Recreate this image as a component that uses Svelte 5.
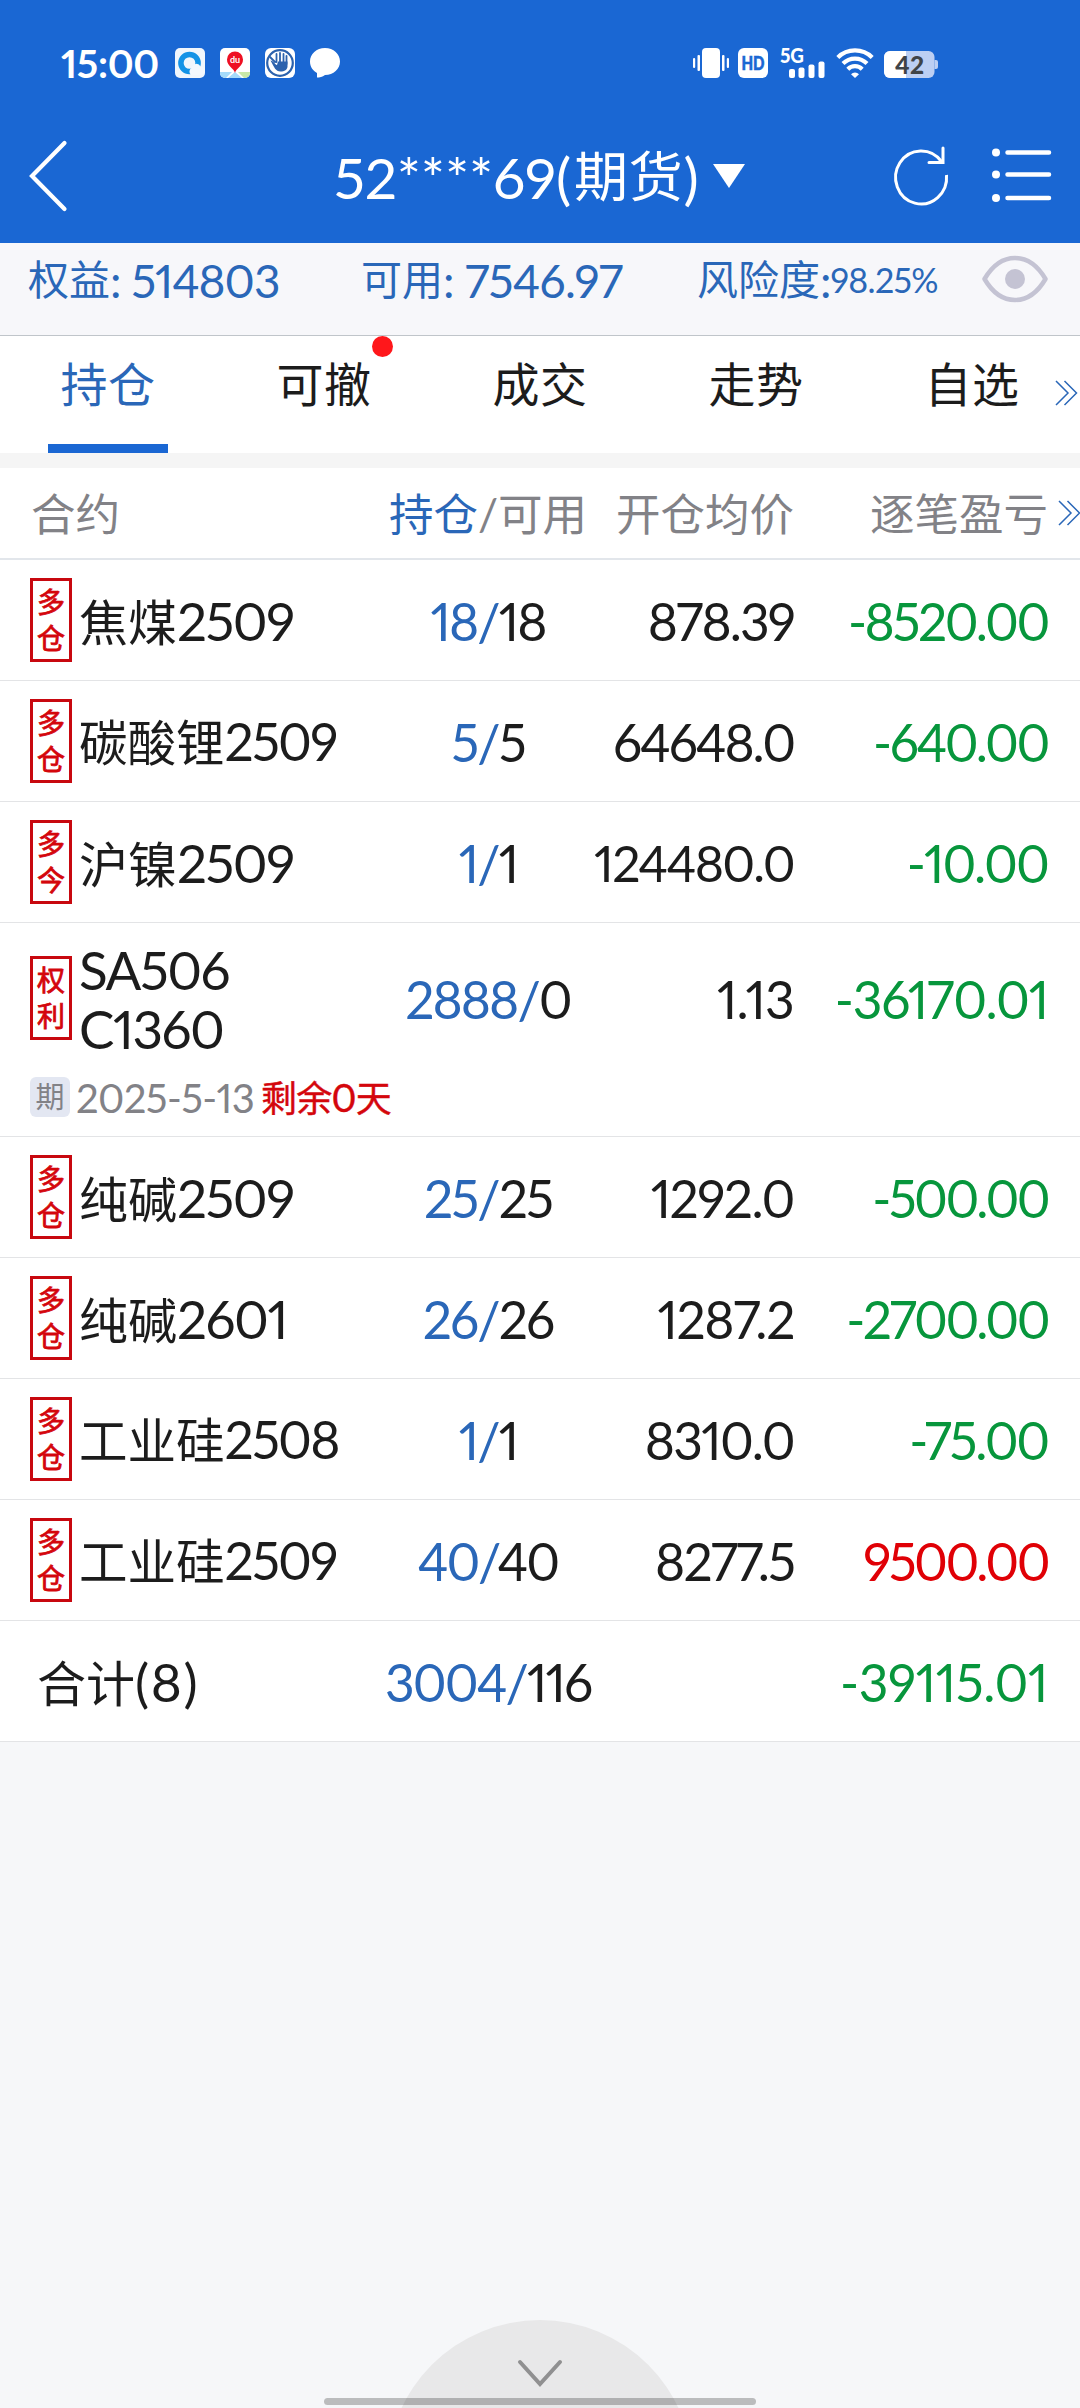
<script lang="ts">
  interface Position {
    tag: string
    name: string
    code: string
    code2?: string
    held: string
    usable: string
    price: string
    profit: string
    expiry?: string
    remain?: number
  }

  let activeTab = $state('持仓')

  const tabs = [
    { label: '持仓', dot: false },
    { label: '可撤', dot: true },
    { label: '成交', dot: false },
    { label: '走势', dot: false },
    { label: '自选', dot: false },
  ]

  const positions: Position[] = [
    { tag: '多仓', name: '焦煤', code: '2509', held: '18', usable: '18', price: '878.39', profit: '-8520.00' },
    { tag: '多仓', name: '碳酸锂', code: '2509', held: '5', usable: '5', price: '64648.0', profit: '-640.00' },
    { tag: '多今', name: '沪镍', code: '2509', held: '1', usable: '1', price: '124480.0', profit: '-10.00' },
    {
      tag: '权利',
      name: '',
      code: 'SA506',
      code2: 'C1360',
      held: '2888',
      usable: '0',
      price: '1.13',
      profit: '-36170.01',
      expiry: '2025-5-13',
      remain: 0,
    },
    { tag: '多仓', name: '纯碱', code: '2509', held: '25', usable: '25', price: '1292.0', profit: '-500.00' },
    { tag: '多仓', name: '纯碱', code: '2601', held: '26', usable: '26', price: '1287.2', profit: '-2700.00' },
    { tag: '多仓', name: '工业硅', code: '2508', held: '1', usable: '1', price: '8310.0', profit: '-75.00' },
    { tag: '多仓', name: '工业硅', code: '2509', held: '40', usable: '40', price: '8277.5', profit: '9500.00' },
  ]

  // proportional figures: the 1 sets tight and the 0 wide, so even the amounts out
  function tracking(value: string) {
    const ones = value.split('1').length - 1
    const zeros = value.split('0').length - 1
    return `${(-1.9 + ones * 0.55 - zeros * 0.17).toFixed(2)}px`
  }
</script>

{#snippet more()}
  <svg class="more" width="22" height="26" viewBox="0 0 22 26">
    <path d="M1 1l12 12L1 25M9.500 1l12 12-12 12" fill="none" stroke="currentColor" stroke-width="1.500" />
  </svg>
{/snippet}

<div class="screen">
  <header>
    <div class="status">
      <span class="clock">15:00</span>
      <div class="apps">
        <svg width="30" height="30" viewBox="0 0 30 30">
          <rect width="30" height="30" rx="5" fill="#f1f6fc" />
          <circle cx="14.500" cy="15" r="8.600" fill="none" stroke="#1593e6" stroke-width="5.500" />
          <path d="M16 27a4.500 4.500 0 0 1 1-7.500 4.500 4.500 0 0 1 8.500-1 4.300 4.300 0 0 1 1 8.500z" fill="#f4f8fd" />
        </svg>
        <svg width="30" height="30" viewBox="0 0 30 30">
          <rect width="30" height="30" rx="5" fill="#fff" />
          <path d="M0 24h12l-6 6H5a5 5 0 0 1-5-5z" fill="#a5dbfa" />
          <path d="M18 24h12v1a5 5 0 0 1-5 5h-1z" fill="#c8e8a8" />
          <path d="M8 30l7-6 7 6z" fill="#a5dbfa" />
          <path d="M15 25c-1-5-8-6.500-8-13.500a8 8 0 0 1 16 0C23 18.500 16 20 15 25z" fill="#ee1023" />
          <text x="15" y="15" text-anchor="middle" font-size="9" font-weight="700" fill="#fff">du</text>
        </svg>
        <svg width="30" height="30" viewBox="0 0 30 30">
          <rect width="30" height="30" rx="6" fill="#fff" />
          <g fill="none" stroke="#2c62ad" stroke-linecap="round">
            <circle cx="15" cy="15" r="12.800" stroke-width="2.200" />
            <path d="M5 9l5 5M11.500 6v8M15 5v9M18.500 6v8M21.500 8v8" stroke-width="1.800" />
          </g>
          <path d="M5.500 12.500c3 0 4 4 6.500 4.500l1-3.500h9.500v5c0 3-3 5-7 5-5 0-6-4-10-11z" fill="#2c62ad" />
        </svg>
        <svg width="30" height="30" viewBox="0 0 30 30">
          <path d="M15 0c8.500 0 15 6 15 13.500S23.500 27 15 27c-2.500 2.200-5.500 2.500-8 2.500V25C3 22.500 0 19 0 13.500 0 6 6.500 0 15 0z" fill="#fff" />
        </svg>
      </div>
      <div class="signals">
        <svg width="36" height="30" viewBox="0 0 36 30" fill="#fff">
          <rect x="9" width="18" height="30" rx="4" />
          <rect x="4.500" y="7" width="2.500" height="16" rx="1" />
          <rect x="0" y="10" width="2.200" height="10" rx="1" />
          <rect x="29" y="7" width="2.500" height="16" rx="1" />
          <rect x="33.800" y="10" width="2.200" height="10" rx="1" />
        </svg>
        <svg class="hd" width="30" height="30" viewBox="0 0 30 30">
          <rect width="30" height="30" rx="6" fill="#fff" />
          <text x="3.500" y="22" textLength="23" lengthAdjust="spacingAndGlyphs" font-size="19" font-weight="900" fill="#1a67d3" stroke="#1a67d3" stroke-width="0.600">HD</text>
        </svg>
        <svg class="cell" width="45" height="30" viewBox="0 0 45 30" fill="#fff">
          <text x="0" y="14.500" textLength="24" lengthAdjust="spacingAndGlyphs" font-size="20" font-weight="900">5G</text>
          <rect x="9" y="21" width="6" height="9" rx="2" />
          <rect x="18.500" y="19.500" width="6" height="10.500" rx="2" />
          <rect x="28.500" y="16.500" width="6" height="13.500" rx="2" />
          <rect x="38.500" y="13.500" width="6" height="16.500" rx="2" />
        </svg>
        <svg class="wifi" width="38" height="30" viewBox="0 0 38 30">
          <g fill="none" stroke="#fff" stroke-width="4.200">
            <path d="M1.800 9.500a24.500 24.500 0 0 1 34.400 0" />
            <path d="M7 15.600a17 17 0 0 1 24 0" />
            <path d="M11.800 21.200a10.200 10.200 0 0 1 14.400 0" />
          </g>
          <path d="M15 26.300a5.600 5.600 0 0 1 8 0l-4 3.700z" fill="#fff" />
        </svg>
        <svg class="battery" width="54" height="27" viewBox="0 0 54 27">
          <rect width="50.500" height="27" rx="6" fill="#bccff3" />
          <path d="M50.500 9h1.500a2 2 0 0 1 2 2v5a2 2 0 0 1-2 2h-1.500z" fill="#bccff3" />
          <path d="M6 0h16v27H6a6 6 0 0 1-6-6V6a6 6 0 0 1 6-6z" fill="#fff" />
          <text x="11" y="22.800" textLength="29" font-size="24.500" font-weight="900" fill="#3f4448">42</text>
        </svg>
      </div>
    </div>

    <div class="titlebar">
      <button class="back" type="button" aria-label="返回">
        <svg width="38" height="72" viewBox="0 0 38 72">
          <path d="M35.500 3L3 36l32.500 33" fill="none" stroke="#fff" stroke-width="4.200" stroke-linecap="round" />
        </svg>
      </button>
      <div class="account">
        <span>52****69(</span><span class="zh">期货</span><span>)</span>
        <svg width="32" height="24" viewBox="0 0 32 24"><path d="M0 0h32L16 24z" fill="#fff" /></svg>
      </div>
      <div class="actions">
        <svg width="54" height="58" viewBox="0 0 54 58" fill="none" stroke="#fff" stroke-width="3">
          <path d="M52.500 28a25.500 26.500 0 1 1-5-13.500" />
          <path d="M49 1v14.500H35" stroke-linecap="round" />
        </svg>
        <svg width="58" height="56" viewBox="0 0 58 56">
          <g fill="#fff">
            <circle cx="4" cy="4.500" r="4" />
            <circle cx="4" cy="26.500" r="4" />
            <circle cx="4" cy="50" r="4" />
          </g>
          <path d="M15.500 4.500H57M15.500 26.500H57M15.500 50H57" stroke="#fff" stroke-width="4.500" stroke-linecap="round" />
        </svg>
      </div>
    </div>
  </header>

  <section class="funds">
    <div class="fund equity"><span class="zh">权益</span>: 514803</div>
    <div class="fund usable"><span class="zh">可用</span>: 7546.97</div>
    <div class="fund risk"><span class="zh">风险度</span>:<small>98.25%</small></div>
    <svg width="66" height="48" viewBox="0 0 66 48">
      <path d="M2.500 24C19-4 47-4 63.500 24 47 52 19 52 2.500 24z" fill="none" stroke="#c4c3d3" stroke-width="4.500" stroke-linejoin="round" />
      <circle cx="33" cy="24" r="10" fill="#c4c3d3" />
    </svg>
  </section>

  <nav class="tabs">
    {#each tabs as tab}
      <button type="button" class="tab" class:active={activeTab === tab.label} onclick={() => (activeTab = tab.label)}>
        {tab.label}
        {#if tab.dot}<i class="dot"></i>{/if}
      </button>
    {/each}
    <span class="tabs-more">{@render more()}</span>
  </nav>

  <main>
    <div class="row thead">
      <span class="contract">合约</span>
      <span class="qty"><b>持仓</b>/可用</span>
      <span class="price">开仓均价</span>
      <span class="profit">逐笔盈亏</span>
      <span class="head-more">{@render more()}</span>
    </div>

    {#each positions as p}
      <div class="item">
        <div class="row" class:tall={p.code2}>
          <div class="contract">
            <span class="tag">{p.tag}</span>
            <span class="name" class:long={p.name.length > 2}>
              {#if p.name}<span class="zh">{p.name}</span>{/if}{p.code}{#if p.code2}<br />{p.code2}{/if}
            </span>
          </div>
          <span class="qty"><b>{p.held}/</b>{p.usable}</span>
          <span class="price" class:long={p.price.length > 7} style:letter-spacing={tracking(p.price)}>{p.price}</span>
          <span class="profit" class:up={!p.profit.startsWith('-')} style:letter-spacing={tracking(p.profit)}>{p.profit}</span>
        </div>
        {#if p.expiry}
          <div class="expiry">
            <span class="mark">期</span>
            <span class="date">{p.expiry}</span>
            <span class="remain"><span class="zh">剩余</span>{p.remain}<span class="zh">天</span></span>
          </div>
        {/if}
      </div>
    {/each}

    <div class="item">
      <div class="row total">
        <div class="contract"><span class="name"><span class="zh">合计</span>(8)</span></div>
        <span class="qty"><b>3004/</b>116</span>
        <span class="price"></span>
        <span class="profit" style:letter-spacing={tracking('-39115.01')}>-39115.01</span>
      </div>
    </div>
  </main>

  <footer>
    <div class="drawer">
      <svg width="46" height="30" viewBox="0 0 46 30">
        <path d="M3 3l20 22L43 3" fill="none" stroke="#909091" stroke-width="4" stroke-linecap="round" />
      </svg>
    </div>
    <div class="home-bar"></div>
  </footer>
</div>

<style>
  :global(body) {
    background: #f6f7f9;
  }

  .screen {
    position: relative;
    width: 1080px;
    height: 2408px;
    overflow: hidden;
    display: flex;
    flex-direction: column;
    background: #f6f7f9;
    color: #1c1c1c;
    font-family: Lato, 'Noto Sans CJK SC', sans-serif;
    font-variant-numeric: proportional-nums lining-nums;
    white-space: nowrap;
  }

  svg {
    display: block;
    flex-shrink: 0;
    overflow: visible;
  }

  button {
    padding: 0;
    border: 0;
    background: none;
    color: inherit;
    font: inherit;
  }

  b {
    font-weight: inherit;
    color: #2a67b8;
  }

  header {
    height: 243px;
    flex-shrink: 0;
    background: #1a67d3;
    color: #fff;
  }

  .status {
    display: flex;
    align-items: center;
    height: 126px;
    padding: 0 142px 0 61px;
  }

  .clock {
    width: 114px;
    font-size: 39px;
    font-weight: 700;
    line-height: 40px;
    letter-spacing: -0.3px;
  }

  .apps {
    display: flex;
    gap: 15px;
  }

  .signals {
    display: flex;
    align-items: center;
    margin-left: auto;
  }

  .hd {
    margin-left: 9px;
  }

  .cell {
    margin-left: 12px;
  }

  .wifi {
    margin-left: 11px;
  }

  .battery {
    margin: 3px 0 0 10px;
  }

  .titlebar {
    display: grid;
    grid-template-columns: 300px 1fr 300px;
    align-items: center;
    height: 99px;
  }

  .back {
    padding-left: 29px;
    justify-self: start;
  }

  .account {
    display: flex;
    align-items: center;
    padding: 2px 0 0 34px;
    font-size: 57px;
    line-height: 90px;
    letter-spacing: -0.2px;
  }

  .account .zh {
    font-size: 54px;
    letter-spacing: 0.8px;
    margin-left: 3px;
  }

  .account svg {
    margin: -2px 0 0 14px;
  }

  .actions {
    display: flex;
    align-items: center;
    justify-content: flex-end;
    gap: 44px;
    padding-right: 30px;
  }

  .funds {
    display: flex;
    align-items: flex-start;
    flex-shrink: 0;
    height: 92px;
    border-bottom: 1px solid #c0c5ca;
    background: #f7f7fa;
    color: #2a67b8;
    font-size: 46px;
    line-height: 76px;
  }

  .fund {
    height: 76px;
    letter-spacing: -1px;
  }

  .fund .zh {
    position: relative;
    top: -3px;
    font-size: 41px;
    letter-spacing: 0;
  }

  .equity {
    width: 333px;
    padding-left: 28px;
  }

  .usable {
    width: 336px;
    letter-spacing: -0.7px;
  }

  .risk {
    width: 285px;
  }

  .risk small {
    position: relative;
    top: -5px;
    font-size: 34px;
    letter-spacing: -0.7px;
  }

  .funds svg {
    margin-top: 12px;
  }

  .tabs {
    position: relative;
    display: grid;
    grid-template-columns: repeat(5, 1fr);
    flex-shrink: 0;
    height: 117px;
    background: #fff;
  }

  .tab {
    position: relative;
    height: 117px;
    padding-bottom: 21px;
    font-size: 47px;
    line-height: 96px;
    letter-spacing: 0.5px;
  }

  .tab.active {
    color: #2a67b8;
  }

  .tab.active::after {
    content: '';
    position: absolute;
    left: 48px;
    bottom: 0;
    width: 120px;
    height: 9px;
    background: #1a67d3;
  }

  .dot {
    position: absolute;
    top: 0;
    right: 39px;
    width: 21px;
    height: 21px;
    border-radius: 50%;
    background: #ff171b;
  }

  .tabs-more,
  .head-more {
    position: absolute;
    color: #2a67b8;
  }

  .tabs-more {
    top: 44px;
    right: 3px;
  }

  .head-more {
    top: 32px;
    right: 0;
  }

  main {
    border-top: 15px solid #f5f5f5;
  }

  .row {
    display: grid;
    grid-template-columns: 370px 236px 188px 254px;
    align-items: center;
    height: 120px;
    font-size: 51.500px;
    line-height: 59px;
    letter-spacing: -1.900px;
  }

  .row.tall {
    height: 150px;
  }

  .thead {
    position: relative;
    height: 90px;
    border-bottom: 2px solid #e2e6eb;
    background: #fff;
    color: #828287;
    font-size: 44.500px;
    letter-spacing: 0;
  }

  .thead .contract {
    padding-left: 31px;
  }

  .item {
    border-bottom: 1px solid #e3e4e6;
    background: #fff;
  }

  .item .qty,
  .item .price,
  .item .profit,
  .item .name {
    padding-top: 2px;
  }

  .contract {
    display: flex;
    align-items: center;
    padding-left: 30px;
  }

  .tag {
    width: 42px;
    height: 84px;
    box-sizing: border-box;
    margin-right: 7px;
    padding: 3px 4px 0;
    border: 3px solid #c8080f;
    color: #d4060c;
    font-size: 28px;
    line-height: 36px;
    letter-spacing: 0;
    text-align: center;
    white-space: normal;
    word-break: break-all;
    -webkit-text-stroke: 0.8px #d4060c;
  }

  .name {
    font-size: 53px;
    letter-spacing: -1.500px;
  }

  .name.long {
    font-size: 51.500px;
    letter-spacing: -1.800px;
  }

  .name .zh {
    font-size: 49px;
    letter-spacing: 0;
  }

  .name.long .zh {
    font-size: 48.500px;
  }

  .total .contract {
    padding-left: 37px;
  }

  .total .name {
    letter-spacing: 1.600px;
  }

  .qty {
    text-align: center;
  }

  .price,
  .profit {
    justify-self: end;
    text-align: right;
  }

  .price.long {
    font-size: 50px;
  }

  .item .profit {
    color: #07963c;
  }

  .item .profit.up {
    color: #e00006;
  }

  .expiry {
    display: flex;
    align-items: center;
    height: 48px;
    padding: 0 0 15px 30px;
    font-size: 40px;
    line-height: 48px;
  }

  .mark {
    width: 40px;
    height: 40px;
    border-radius: 6px;
    background: #e3e7f2;
    color: #828287;
    font-size: 29px;
    line-height: 40px;
    text-align: center;
  }

  .date {
    width: 185px;
    padding: 2px 0 0 6px;
    color: #828287;
    letter-spacing: -0.6px;
  }

  .remain {
    color: #d4060c;
    font-size: 38px;
    letter-spacing: -0.8px;
    -webkit-text-stroke: 0.4px #d4060c;
  }

  .remain .zh {
    font-size: 36px;
  }

  footer {
    position: absolute;
    left: 0;
    right: 0;
    bottom: 0;
    height: 88px;
    overflow: hidden;
  }

  .drawer {
    display: flex;
    justify-content: center;
    width: 306px;
    height: 306px;
    box-sizing: border-box;
    margin: 0 auto;
    padding-top: 39px;
    border-radius: 50%;
    background: #e8e8e9;
  }

  .home-bar {
    position: absolute;
    left: 324px;
    bottom: 3px;
    width: 432px;
    height: 7px;
    border-radius: 4px;
    background: rgba(0, 0, 0, 0.24);
  }
</style>
